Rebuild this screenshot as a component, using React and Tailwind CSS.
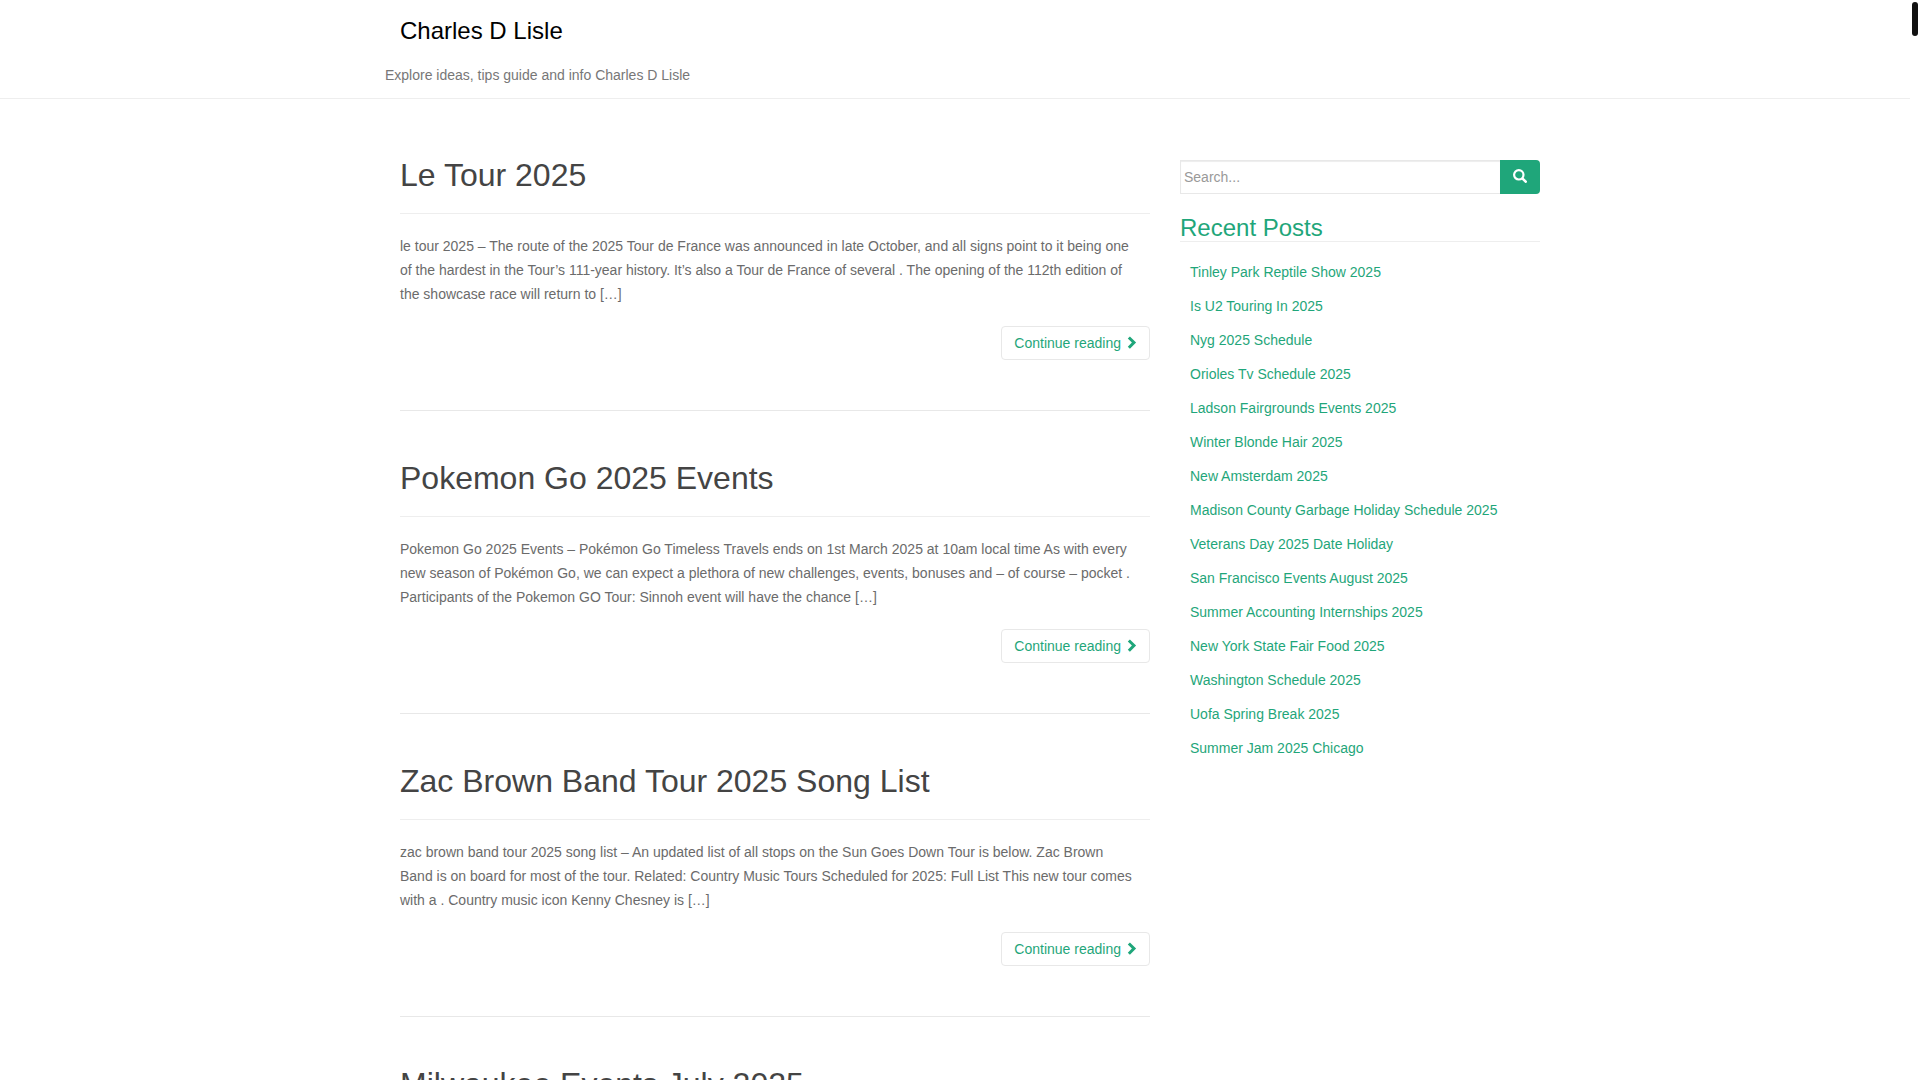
const posts = [
  {
    title: "Le Tour 2025",
    excerpt:
      "le tour 2025 – The route of the 2025 Tour de France was announced in late October, and all signs point to it being one of the hardest in the Tour’s 111-year history. It’s also a Tour de France of several . The opening of the 112th edition of the showcase race will return to […]",
  },
  {
    title: "Pokemon Go 2025 Events",
    excerpt:
      "Pokemon Go 2025 Events – Pokémon Go Timeless Travels ends on 1st March 2025 at 10am local time As with every new season of Pokémon Go, we can expect a plethora of new challenges, events, bonuses and – of course – pocket . Participants of the Pokemon GO Tour: Sinnoh event will have the chance […]",
  },
  {
    title: "Zac Brown Band Tour 2025 Song List",
    excerpt:
      "zac brown band tour 2025 song list – An updated list of all stops on the Sun Goes Down Tour is below. Zac Brown Band is on board for most of the tour. Related: Country Music Tours Scheduled for 2025: Full List This new tour comes with a . Country music icon Kenny Chesney is […]",
  },
  { title: "Milwaukee Events July 2025" },
];

const recentPosts = [
  "Tinley Park Reptile Show 2025",
  "Is U2 Touring In 2025",
  "Nyg 2025 Schedule",
  "Orioles Tv Schedule 2025",
  "Ladson Fairgrounds Events 2025",
  "Winter Blonde Hair 2025",
  "New Amsterdam 2025",
  "Madison County Garbage Holiday Schedule 2025",
  "Veterans Day 2025 Date Holiday",
  "San Francisco Events August 2025",
  "Summer Accounting Internships 2025",
  "New York State Fair Food 2025",
  "Washington Schedule 2025",
  "Uofa Spring Break 2025",
  "Summer Jam 2025 Chicago",
];

function ChevronIcon() {
  return (
    <svg viewBox="0 0 12 14" className="h-3.5 w-3" fill="currentColor" aria-hidden="true">
      <path d="M2.8 2.5 4.9 .4 11.1 6.6 4.9 12.8 2.8 10.7 6.9 6.6Z" />
    </svg>
  );
}

function SearchIcon() {
  return (
    <svg viewBox="0 0 14 14" className="size-3.5" fill="none" stroke="currentColor" aria-hidden="true">
      <circle cx="5.8" cy="5.8" r="4.7" strokeWidth="2.2" />
      <path d="M9.6 9.6 12.7 12.7" strokeWidth="2.6" strokeLinecap="round" />
    </svg>
  );
}

function Post({ title, excerpt }) {
  return (
    <article className="mb-[50px] border-b border-[#e8e8e8] pb-[50px]">
      <h2 className="border-b border-[#eee] pb-5 text-[32px] leading-[35px] text-[#444]">
        <a href="#">{title}</a>
      </h2>
      {excerpt && (
        <>
          <p className="my-5 pr-[15px]">{excerpt}</p>
          <div className="flex justify-end">
            <a
              href="#"
              className="flex h-[34px] items-center gap-1 rounded border border-[#e8e8e8] px-3 text-[#1fa67a]"
            >
              Continue reading
              <ChevronIcon />
            </a>
          </div>
        </>
      )}
    </article>
  );
}

function Sidebar() {
  return (
    <aside className="w-1/3 px-[15px] pt-0.5">
      <form className="flex h-[34px]" onSubmit={(e) => e.preventDefault()}>
        <input
          type="text"
          aria-label="Search"
          placeholder="Search..."
          className="min-w-0 flex-1 border border-r-0 border-[#e8e8e8] bg-white px-[3px] shadow-[inset_0_1px_1px_rgba(0,0,0,0.075)] outline-none placeholder:text-[#999]"
        />
        <button
          type="submit"
          aria-label="Submit search"
          className="flex w-10 items-center justify-center rounded-r bg-[#1fa67a] pb-0.5 text-white"
        >
          <SearchIcon />
        </button>
      </form>

      <h3 className="mt-5 border-b border-[#eee] text-2xl leading-[27px] text-[#1fa67a]">
        Recent Posts
      </h3>
      <ul className="mt-[13px] px-2.5">
        {recentPosts.map((name) => (
          <li key={name} className="py-[5px]">
            <a href="#" className="text-[#1fa67a]">
              {name}
            </a>
          </li>
        ))}
      </ul>
    </aside>
  );
}

export default function App() {
  return (
    <div className="relative h-screen overflow-hidden bg-white pr-2.5 font-['Liberation_Sans',Arial,sans-serif] text-sm leading-6 text-[#6b6b6b]">
      <header className="border-b border-[#eee]">
        <div className="mx-auto max-w-[1170px] px-[15px] pt-[15px] pb-[11px]">
          <h1 className="px-[15px] text-2xl leading-8 text-black">
            <a href="#">Charles D Lisle</a>
          </h1>
          <p className="mt-4 text-[#777]">Explore ideas, tips guide and info Charles D Lisle</p>
        </div>
      </header>

      <div className="mx-auto flex max-w-[1200px] items-start pt-[59px] pl-[30px]">
        <main className="w-2/3 px-[15px]">
          {posts.map((post) => (
            <Post key={post.title} {...post} />
          ))}
        </main>
        <Sidebar />
      </div>

      {/* slim scroll thumb */}
      <div className="absolute top-0.5 right-0.5 h-[34px] w-1.5 rounded-full bg-[#111]" />
    </div>
  );
}
